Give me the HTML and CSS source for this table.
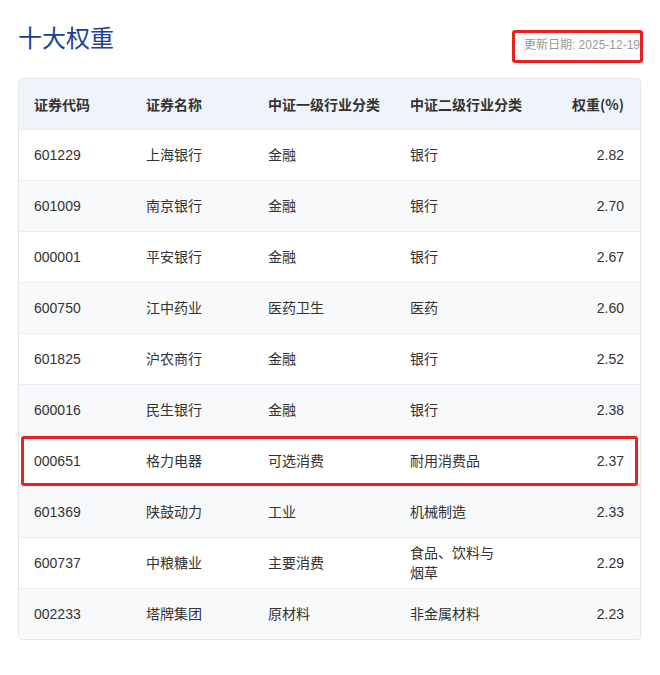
FILE: index.html
```html
<!DOCTYPE html>
<html lang="zh-CN">
<head>
<meta charset="utf-8">
<title>十大权重</title>
<link rel="stylesheet" href="styles.css">
</head>
<body>
<div class="page">
  <div class="head">
    <h2 class="title">十大权重</h2>
    <div class="date">更新日期: 2025-12-19</div>
  </div>
  <div class="table-wrap">
    <table class="tbl">
      <colgroup>
        <col class="c1"><col class="c2"><col class="c3"><col class="c4"><col class="c5">
      </colgroup>
      <thead>
        <tr><th>证券代码</th><th>证券名称</th><th>中证一级行业分类</th><th>中证二级行业分类</th><th class="num">权重(%)</th></tr>
      </thead>
      <tbody>
        <tr><td>601229</td><td>上海银行</td><td>金融</td><td>银行</td><td class="num">2.82</td></tr>
        <tr><td>601009</td><td>南京银行</td><td>金融</td><td>银行</td><td class="num">2.70</td></tr>
        <tr><td>000001</td><td>平安银行</td><td>金融</td><td>银行</td><td class="num">2.67</td></tr>
        <tr><td>600750</td><td>江中药业</td><td>医药卫生</td><td>医药</td><td class="num">2.60</td></tr>
        <tr><td>601825</td><td>沪农商行</td><td>金融</td><td>银行</td><td class="num">2.52</td></tr>
        <tr><td>600016</td><td>民生银行</td><td>金融</td><td>银行</td><td class="num">2.38</td></tr>
        <tr><td>000651</td><td>格力电器</td><td>可选消费</td><td>耐用消费品</td><td class="num">2.37</td></tr>
        <tr><td>601369</td><td>陕鼓动力</td><td>工业</td><td>机械制造</td><td class="num">2.33</td></tr>
        <tr><td>600737</td><td>中粮糖业</td><td>主要消费</td><td>食品、饮料与烟草</td><td class="num">2.29</td></tr>
        <tr><td>002233</td><td>塔牌集团</td><td>原材料</td><td>非金属材料</td><td class="num">2.23</td></tr>
      </tbody>
    </table>
  </div>
  <div class="mark mark-date"></div>
  <div class="mark mark-row"></div>
</div>
</body>
</html>
```
FILE: styles.css
```css
html, body {
  margin: 0;
  padding: 0;
  background: #fff;
}
body {
  font-family: "Liberation Sans", Arial, "Noto Sans CJK SC", sans-serif;
  color: #333;
}
.page {
  position: relative;
  width: 623px;
  margin-left: 18px;
  padding-top: 20px;
}
.head {
  display: flex;
  justify-content: space-between;
  align-items: flex-start;
  height: 58px;
}
.title {
  margin: 0;
  font-family: "Noto Sans CJK SC", sans-serif;
  font-weight: 400;
  font-size: 24px;
  line-height: 34px;
  color: #1c3f94;
}
.date {
  margin-top: 17px;
  margin-right: 1px;
  font-size: 12px;
  line-height: 16px;
  color: #999;
  white-space: nowrap;
}
.table-wrap {
  border: 1px solid #e3e6ea;
  border-radius: 4px;
  overflow: hidden;
}
.tbl {
  width: 100%;
  border-collapse: collapse;
  table-layout: fixed;
  font-size: 14px;
}
.c1 { width: 112px; }
.c2 { width: 122px; }
.c3 { width: 142px; }
.c4 { width: 111px; }
.c5 { width: auto; }
.tbl th, .tbl td {
  text-align: left;
  padding: 0 0 0 15px;
  height: 50px;
  line-height: 20px;
  vertical-align: middle;
}
.tbl th {
  background: #eff3fa;
  font-weight: 700;
  color: #333;
  white-space: nowrap;
  font-family: "Noto Sans CJK SC", "Liberation Sans", sans-serif;
  font-size: 14px;
}
.tbl td {
  border-top: 1px solid #e9ecf0;
  color: #333;
}
.tbl td:nth-child(4) {
  padding-right: 12px;
}
.tbl tbody tr:nth-child(even) td {
  background: #f8f9fb;
}
.tbl .num {
  text-align: right;
  padding-right: 16px;
}
.mark {
  position: absolute;
  border: 3px solid #e8231f;
  border-radius: 3px;
  pointer-events: none;
}
.mark-date {
  left: 494px;
  top: 30px;
  width: 125px;
  height: 27px;
}
.mark-row {
  left: 3px;
  top: 436px;
  width: 611px;
  height: 44px;
}
```
